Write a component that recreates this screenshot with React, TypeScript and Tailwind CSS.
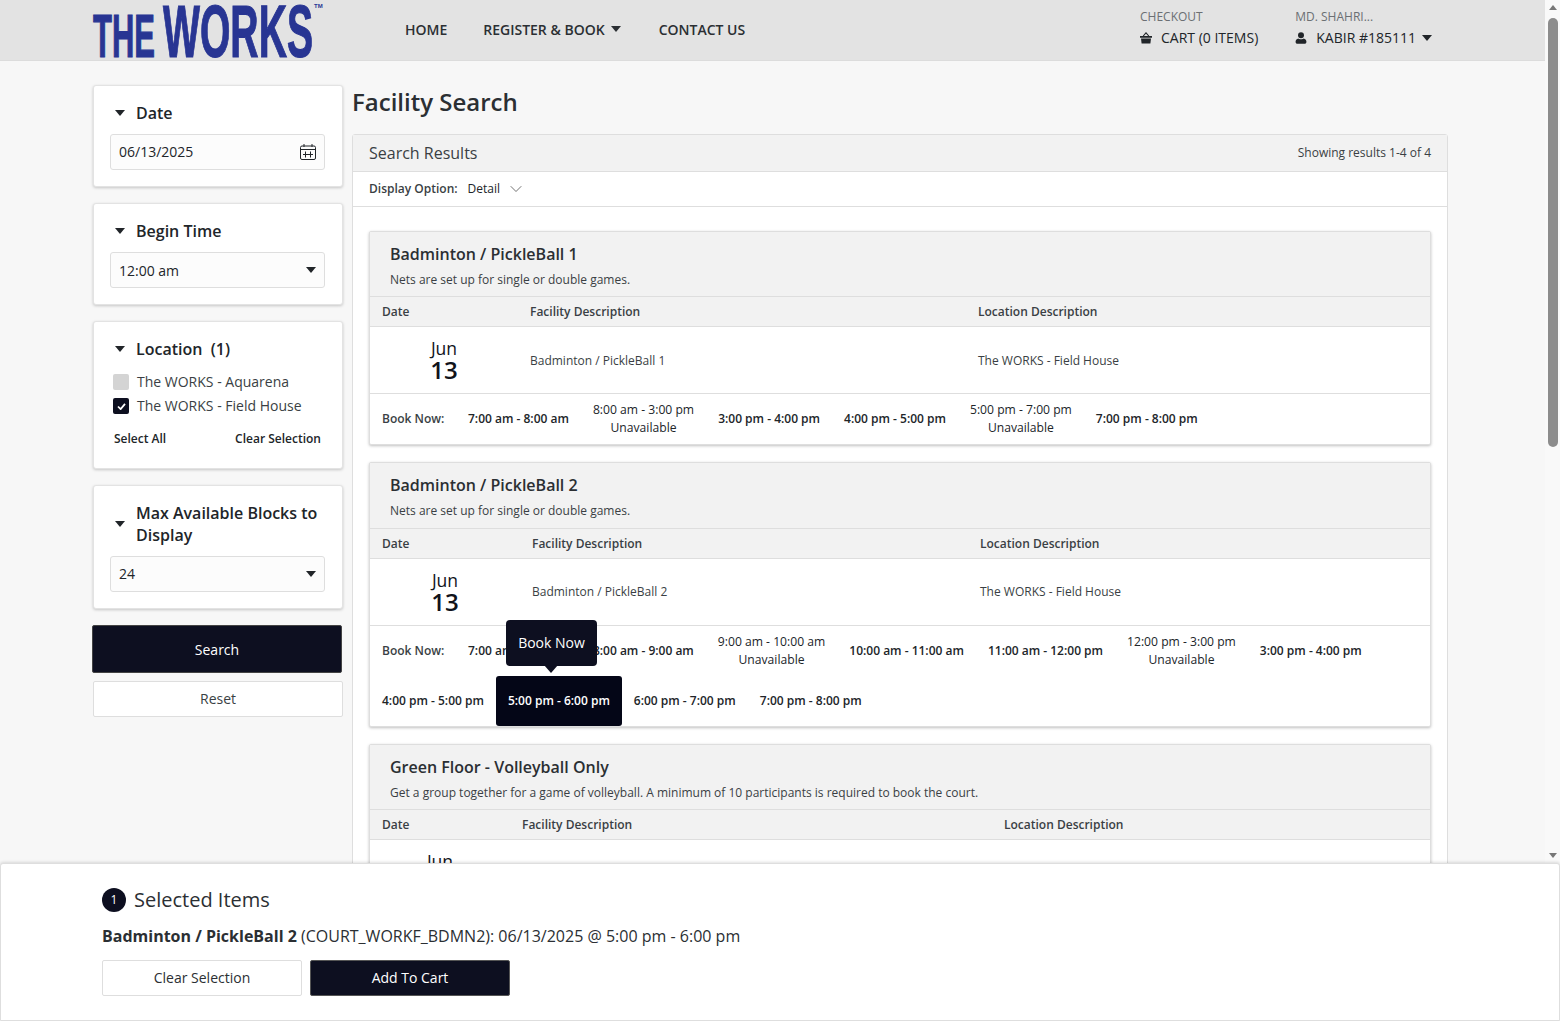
import React from 'react';
import { ChevronDown } from 'lucide-react';

const FONT = "font-['Open_Sans',sans-serif]";

const Caret = ({ className = '' }: { className?: string }) => (
  <svg viewBox="0 0 10 6" className={`w-[10px] h-[6px] fill-current ${className}`}>
    <path d="M0 0h10L5 6z" />
  </svg>
);

const BasketIcon = () => (
  <svg viewBox="0 0 12 12" className="w-3 h-3 fill-[#212529]">
    <path d="M0 4h12v1.8H0zM1 6.6h10l-.6 5H1.600z" />
    <path d="M3.200 4 6 .8 8.800 4" fill="none" stroke="#212529" strokeWidth="1.100" />
  </svg>
);

const UserIcon = () => (
  <svg viewBox="0 0 12 12" className="w-3 h-3 fill-[#212529]">
    <circle cx="6" cy="3.200" r="3" />
    <path d="M.6 9.400C.6 7.800 2 6.800 3.200 6.400 4 7.400 8 7.400 8.800 6.400 10 6.800 11.400 7.800 11.400 9.400V10C11.400 11 10.600 11.800 9.600 11.800H2.400C1.400 11.800.6 11 .6 10z" />
  </svg>
);

const CalendarIcon = () => (
  <svg viewBox="0 0 16 16" className="w-4 h-4 fill-none stroke-[#212529]" strokeWidth="1">
    <rect x="0.5" y="2" width="15" height="13.500" rx="1.500" />
    <path d="M0.500 5.500h15M4 0v3M12 0v3M3 10.500h10M5.500 7.500v6M10.500 7.500v6" />
  </svg>
);

const Logo = () => (
  <svg viewBox="0 0 232 60" className="w-[232px] h-[60px] block overflow-visible" fill="#283593" stroke="#283593" strokeWidth="1.2">
    <text x="0" y="57" fontFamily="Liberation Sans" fontWeight="700" fontSize="61" textLength="62" lengthAdjust="spacingAndGlyphs">THE</text>
    <text x="70" y="57" fontFamily="Liberation Sans" fontWeight="700" fontSize="75" textLength="150" lengthAdjust="spacingAndGlyphs">WORKS</text>
    <text x="221" y="8" fontFamily="Liberation Sans" fontWeight="700" fontSize="6" strokeWidth="0">TM</text>
  </svg>
);

const FilterCard = ({ title, children, className = '' }: { title: React.ReactNode; children: React.ReactNode; className?: string }) => (
  <div className={`bg-white border border-[#e3e3e3] rounded-[3px] shadow-[0_1px_3px_rgba(0,0,0,0.2)] pl-4 pr-[17px] ${className}`}>
    <div className="flex items-center text-[#212529]">
      <Caret className="mr-[11px] ml-[5px] shrink-0" />
      <div className="text-[16px] leading-[22px] font-semibold">{title}</div>
    </div>
    {children}
  </div>
);

const SelectBox = ({ value, textClass = '' }: { value: string; textClass?: string }) => (
  <div className="h-9 bg-[#fcfcfc] border border-[#dedede] rounded-[3px] flex items-center justify-between pl-2 pr-[7px] text-[14px] text-[#212529]">
    <span className={textClass}>{value}</span>
    <Caret className="mr-[1px]" />
  </div>
);

type Slot = { time: string; unavailable?: boolean; active?: boolean };

const SlotCell = ({ slot, flush }: { slot: Slot; flush?: boolean }) => (
  <div className={`${flush ? 'pr-3' : 'px-3'} h-[50px] flex flex-col justify-center items-center leading-[18px] rounded-[3px] whitespace-nowrap ${slot.unavailable ? 'text-[12.15px] font-medium' : 'text-[12px] font-semibold'} ${slot.active ? 'bg-[#040617] text-white' : 'text-[#212529]'}`}>
    <span>{slot.time}</span>
    {slot.unavailable && <span>Unavailable</span>}
  </div>
);

const FacilityCard = ({ name, desc, col2, col3, headH, rows, location, last, tooltip, textShift = '' }: {
  name: string;
  desc: string;
  col2: string;
  col3: string;
  headH: string;
  rows: Slot[][];
  location: string;
  last?: boolean;
  tooltip?: boolean;
  textShift?: string;
}) => (
  <div className={`bg-white border border-[#dedede] rounded-[2px] shadow-[0_1px_3px_rgba(0,0,0,0.25)] relative ${last ? 'mb-0' : 'mb-[17px]'}`}>
    <div className={`bg-[#f2f2f2] border-b border-[#dedede] pl-5 ${headH}`}>
      <div className="text-[16px] leading-[22px] font-semibold text-[#2b2f33] pt-[11px]">{name}</div>
      <div className="text-[12px] leading-[18px] text-[#3a3f44] mt-[6px]">{desc}</div>
    </div>
    <div className="h-[30px] bg-[#f2f2f2] border-b border-[#dedede] flex items-center text-[12px] font-semibold text-[#3a3f44] pl-3">
      <div className={col2}>Date</div>
      <div className={col3}>Facility Description</div>
      <div>Location Description</div>
    </div>
    <div className="h-[67px] border-b border-[#dedede] flex items-center text-[12px] text-[#3a3f44] pl-3">
      <div className={`${col2} pr-6 pt-[1px]`}>
        <div className="flex flex-col items-center text-[#10131a]">
          <span className="text-[17.5px] leading-[18px]">Jun</span>
          <span className="text-[24px] leading-[26px] font-semibold">13</span>
        </div>
      </div>
      <div className={`${col3} ${textShift}`}>{name}</div>
      <div className={textShift}>{location}</div>
    </div>
    <div className="pl-3 relative">
      {rows.map((row, i) => (
        <div key={i} className="flex items-center h-[50px]">
          {i === 0 && <div className="text-[12px] font-semibold text-[#3a3f44] w-[74px] shrink-0">Book Now:</div>}
          {row.map((s, j) => <SlotCell key={s.time} slot={s} flush={i > 0 && j === 0} />)}
        </div>
      ))}
      {tooltip && (
        <div className="absolute left-[136px] top-[-6px] w-[91px] h-[46px] bg-[#0d0f20] text-white rounded-[4px] flex items-center justify-center text-[14px] pb-[2px] z-10">
          Book Now
          <div className="absolute left-[38px] bottom-[-7px] w-0 h-0 border-l-[7px] border-r-[7px] border-t-[8px] border-l-transparent border-r-transparent border-t-[#0d0f20]" />
        </div>
      )}
    </div>
  </div>
);

export default function App() {
  return (
    <div className={`${FONT} w-[1560px] h-[1021px] overflow-hidden relative flex bg-[#f7f7f7] text-[#212529]`}>
      <div className="flex-1 min-w-0 h-[863px] overflow-hidden flex flex-col">
        {/* top nav */}
        <header className="h-[61px] shrink-0 bg-[#e3e3e3] border-b border-[#dcdcdc] flex pl-[93px]">
          <Logo />
          <nav className="ml-[80px] pb-[2px] flex items-center gap-9 text-[14px] font-semibold text-[#2b2f33]">
            <span>HOME</span>
            <span className="flex items-center gap-[6px]">REGISTER &amp; BOOK <Caret /></span>
            <span className="ml-[2px]">CONTACT US</span>
          </nav>
          <div className="ml-auto mr-[113px] flex gap-[37px] text-[14px]">
            <div className="pt-[9px]">
              <div className="text-[12px] leading-[16px] text-[#6b6f73]">CHECKOUT</div>
              <div className="flex items-center gap-[9px] mt-[3px] leading-[20px] font-medium"><BasketIcon /> CART (0 ITEMS)</div>
            </div>
            <div className="pt-[9px]">
              <div className="text-[12px] leading-[16px] text-[#6b6f73]">MD. SHAHRI...</div>
              <div className="flex items-center gap-[9px] mt-[3px] leading-[20px] font-medium"><UserIcon /> <span className="flex items-center gap-[6px]">KABIR #185111 <Caret /></span></div>
            </div>
          </div>
        </header>

        <div className="flex flex-1 min-h-0 pl-[93px] pr-[97px] pt-6">
          {/* left filters */}
          <aside className="w-[250px] shrink-0 flex flex-col">
            <FilterCard title="Date" className="pt-[16px] h-[102px] mb-[16px]">
              <div className="mt-[10px] h-9 bg-[#fcfcfc] border border-[#dedede] rounded-[3px] flex items-center justify-between pl-2 pr-2 text-[14px]">
                <span className="pb-[2px]">06/13/2025</span>
                <CalendarIcon />
              </div>
            </FilterCard>
            <FilterCard title="Begin Time" className="pt-[16px] h-[102px] mb-[16px]">
              <div className="mt-[10px]"><SelectBox value="12:00 am" /></div>
            </FilterCard>
            <FilterCard title={<span>Location&nbsp; (1)</span>} className="pt-[16px] h-[148px] mb-[16px]">
              <div className="mt-[14px] flex flex-col gap-2 text-[14px] leading-[16px] text-[#3a3f44] pl-[3px]">
                <div className="flex items-center gap-2">
                  <span className="w-4 h-4 rounded-[2px] bg-[#d4d4d4]" />
                  The WORKS - Aquarena
                </div>
                <div className="flex items-center gap-2">
                  <span className="w-4 h-4 rounded-[2px] bg-[#0d0f20] flex items-center justify-center">
                    <svg viewBox="0 0 10 8" className="w-[9px] h-[7px] fill-none stroke-white" strokeWidth="2"><path d="M1 4l3 3 5-6" /></svg>
                  </span>
                  The WORKS - Field House
                </div>
              </div>
              <div className="mt-[16px] flex justify-between text-[12px] leading-[18px] font-semibold pl-1 pr-[4px]">
                <span>Select All</span>
                <span>Clear Selection</span>
              </div>
            </FilterCard>
            <FilterCard title="Max Available Blocks to Display" className="pt-[16px] h-[124px] mb-4">
              <div className="mt-[10px]"><SelectBox value="24" textClass="pb-[2px]" /></div>
            </FilterCard>
            <button className="h-12 w-[250px] -ml-px bg-[#0d0f20] border border-[#444] rounded-[2px] text-white text-[14px]">Search</button>
            <button className="mt-2 h-9 bg-white border border-[#dedede] rounded-[2px] text-[14px] text-[#3a3f44] pb-[2px]">Reset</button>
          </aside>

          {/* results */}
          <main className="flex-1 min-w-0 ml-[9px] overflow-hidden">
            <h1 className="text-[24px] leading-[36px] font-semibold text-[#2b2f33] -mt-px">Facility Search</h1>
            <div className="mt-[14px] bg-white border border-[#dedede] rounded-[3px]">
              <div className="h-[37px] bg-[#f2f2f2] border-b border-[#dedede] flex items-center justify-between px-4">
                <span className="text-[16px] text-[#3a3f44]">Search Results</span>
                <span className="text-[12px] text-[#3a3f44]">Showing results 1-4 of 4</span>
              </div>
              <div className="h-[35px] border-b border-[#dedede] flex items-center px-4 text-[12px]">
                <span className="font-semibold text-[#3a3f44]">Display Option:</span>
                <span className="ml-[10px]">Detail</span>
                <ChevronDown size={20} strokeWidth={1} className="ml-[6px] text-[#555]" />
              </div>
              <div className="px-4 pt-6 pb-6">
                <FacilityCard
                  name="Badminton / PickleBall 1"
                  desc="Nets are set up for single or double games."
                  col2="w-[148px]"
                  col3="w-[448px]"
                  headH="h-[65px]"
                  location="The WORKS - Field House"
                  textShift="pt-[2px]"
                  rows={[[
                    { time: '7:00 am - 8:00 am' },
                    { time: '8:00 am - 3:00 pm', unavailable: true },
                    { time: '3:00 pm - 4:00 pm' },
                    { time: '4:00 pm - 5:00 pm' },
                    { time: '5:00 pm - 7:00 pm', unavailable: true },
                    { time: '7:00 pm - 8:00 pm' },
                  ]]}
                />
                <FacilityCard
                  name="Badminton / PickleBall 2"
                  desc="Nets are set up for single or double games."
                  col2="w-[150px]"
                  col3="w-[448px]"
                  headH="h-[66px]"
                  location="The WORKS - Field House"
                  tooltip
                  rows={[[
                    { time: '7:00 am - 8:00 am' },
                    { time: '8:00 am - 9:00 am' },
                    { time: '9:00 am - 10:00 am', unavailable: true },
                    { time: '10:00 am - 11:00 am' },
                    { time: '11:00 am - 12:00 pm' },
                    { time: '12:00 pm - 3:00 pm', unavailable: true },
                    { time: '3:00 pm - 4:00 pm' },
                  ], [
                    { time: '4:00 pm - 5:00 pm' },
                    { time: '5:00 pm - 6:00 pm', active: true },
                    { time: '6:00 pm - 7:00 pm' },
                    { time: '7:00 pm - 8:00 pm' },
                  ]]}
                />
                <FacilityCard
                  last
                  name="Green Floor - Volleyball Only"
                  desc="Get a group together for a game of volleyball. A minimum of 10 participants is required to book the court."
                  col2="w-[140px]"
                  col3="w-[482px]"
                  headH="h-[65px]"
                  location="The WORKS - Field House"
                  rows={[]}
                />
              </div>
            </div>
          </main>
        </div>
      </div>

      {/* page scrollbar */}
      <div className="w-[15px] shrink-0 bg-[#f9f9f9] h-[864px] flex flex-col items-center relative">
        <div className="mt-[5px] w-0 h-0 border-l-[4px] border-r-[4px] border-b-[5px] border-l-transparent border-r-transparent border-b-[#777]" />
        <div className="mt-[8px] w-[10px] h-[429px] bg-[#8c8c8c] rounded-[5px]" />
        <div className="mt-auto mb-[6px] w-0 h-0 border-l-[4px] border-r-[4px] border-t-[5px] border-l-transparent border-r-transparent border-t-[#777]" />
      </div>

      {/* selected items footer */}
      <div className="absolute left-0 right-0 bottom-0 h-[158px] bg-white border border-[#dedede] rounded-t-[3px] shadow-[0_-1px_3px_rgba(0,0,0,0.12)] pl-[101px] pt-[23px]">
        <div className="flex items-center gap-2">
          <span className="w-6 h-6 rounded-full bg-[#0d0f20] text-white text-[12px] flex items-center justify-center">1</span>
          <span className="text-[20px] leading-[26px] text-[#2b2f33]">Selected Items</span>
        </div>
        <div className="mt-[11px] text-[16px] leading-[24px] text-[#2b2f33]">
          <span className="font-bold">Badminton / PickleBall 2</span> (COURT_WORKF_BDMN2): 06/13/2025 @ 5:00 pm - 6:00 pm
        </div>
        <div className="mt-[12px] flex gap-2">
          <button className="w-[200px] h-9 bg-white border border-[#dedede] rounded-[2px] text-[14px] text-[#2b2f33] pb-[2px]">Clear Selection</button>
          <button className="w-[200px] h-9 bg-[#0d0f20] border border-[#555] rounded-[2px] text-[14px] text-white pb-[2px]">Add To Cart</button>
        </div>
      </div>
    </div>
  );
}
